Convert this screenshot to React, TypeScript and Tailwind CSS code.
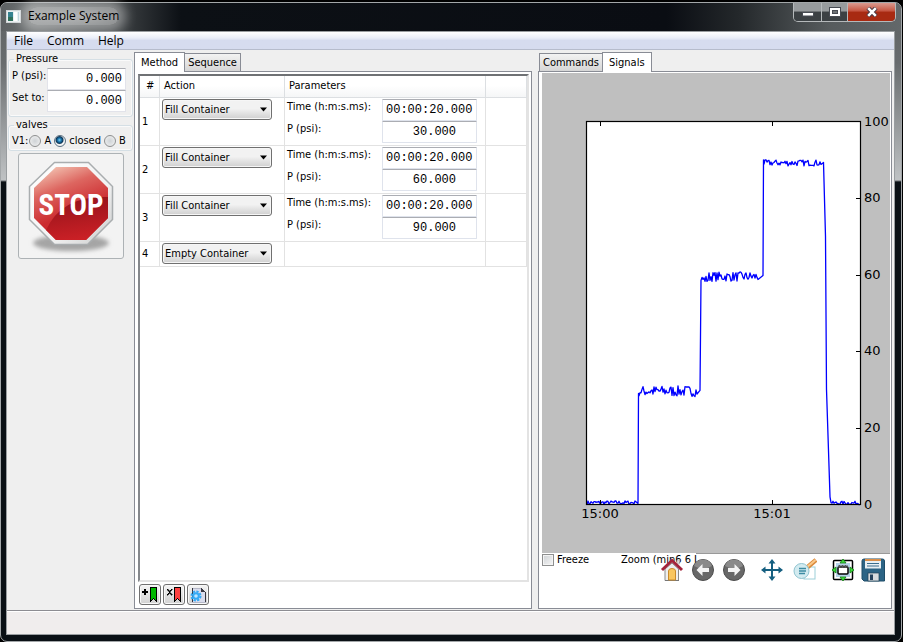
import React from "react";

const NOTEBOOK_BORDER = "border border-[#898c95]";

function Tab({ label, active = false }: { label: string; active?: boolean }) {
  return (
    <button
      type="button"
      role="tab"
      aria-selected={active}
      className={
        active
          ? "relative z-10 -mb-px h-5 border border-b-0 border-[#898c95] bg-white px-[6px] leading-[18px]"
          : "h-[18px] border-x border-t border-[#898c95] bg-linear-to-b from-[#f3f3f3] to-[#d6d6d6] px-[3px] leading-[18px] first:border-r-0 [&:not(:first-child)]:border-l-0"
      }
    >
      {label}
    </button>
  );
}

function FieldSet({ legend, children }: { legend: string; children: React.ReactNode }) {
  return (
    <fieldset className="mx-px rounded-[3px] border border-[#d5dfe5] px-[3px] shadow-[inset_0_0_0_1px_#fafafa]">
      <legend className="ml-[2px] px-[2px] leading-[14px]">{legend}</legend>
      {children}
    </fieldset>
  );
}

function PressureRow({ id, label, value }: { id: string; label: string; value: string }) {
  return (
    <div className="flex">
      <label htmlFor={id} className="w-[35px] shrink-0 whitespace-nowrap leading-[16px]">
        {label}
      </label>
      <input
        id={id}
        defaultValue={value}
        className="h-[22px] w-0 min-w-0 flex-1 border border-[#e2e3ea] border-t-[#abadb3] bg-white pr-[3px] text-right font-['Liberation_Mono',monospace] text-[12px]"
      />
    </div>
  );
}

function ValveRadio({ label, checked = false }: { label: string; checked?: boolean }) {
  return (
    <label className="flex items-center gap-[3px]">
      <input
        type="radio"
        name="v1"
        defaultChecked={checked}
        className="h-3 w-3 appearance-none rounded-full border border-[#8e8f8f] bg-radial from-[#cfd3d6] to-[#f4f4f4] checked:border-[#5a6f80] checked:bg-[radial-gradient(circle_at_45%_40%,#7fd0f5_0,#1b78b0_22%,#0c3556_42%,#f4f4f4_56%)]"
      />
      {label}
    </label>
  );
}

function StopSign() {
  return (
    <svg width="90" height="98" viewBox="26 157 90 98" role="img" aria-label="Stop">
      <defs>
        <linearGradient id="rim" x1="0" y1="0" x2="1" y2="1">
          <stop offset="0" stopColor="#ffffff" />
          <stop offset="0.6" stopColor="#f2f2f2" />
          <stop offset="1" stopColor="#c9caca" />
        </linearGradient>
        <linearGradient id="red" x1="0.2" y1="0" x2="0.6" y2="1">
          <stop offset="0" stopColor="#f3c3b2" />
          <stop offset="0.3" stopColor="#dd6660" />
          <stop offset="0.65" stopColor="#cc2c30" />
          <stop offset="1" stopColor="#c81f25" />
        </linearGradient>
        <linearGradient id="shade" x1="0.3" y1="0" x2="0.5" y2="1">
          <stop offset="0" stopColor="#93131a" />
          <stop offset="1" stopColor="#cb2026" />
        </linearGradient>
        <filter id="soft" x="-20%" y="-60%" width="140%" height="220%">
          <feGaussianBlur stdDeviation="2" />
        </filter>
      </defs>
      <ellipse cx="71" cy="243" rx="38" ry="8" fill="#a5a5a5" filter="url(#soft)" />
      <path d="M54.500 162.500H88.500L112.500 186.500V219.500L87.500 244.500H54.500L29.500 219.500V186.500Z" fill="url(#rim)" stroke="#a9adaf" strokeWidth="1.500" />
      <path d="M56 167H87L108 188V218L86 240H56L34 218V188Z" fill="url(#red)" />
      <path d="M108 197Q62 195 46 230L56 240H86L108 218Z" fill="url(#shade)" />
      <text x="71" y="215" textAnchor="middle" fill="#fff" fontWeight="700" fontSize="29" fontFamily="'Liberation Sans Narrow','Roboto Condensed',sans-serif">
        STOP
      </text>
    </svg>
  );
}

function LeftPanel() {
  return (
    <aside className="flex w-[127px] shrink-0 flex-col bg-[#efefef] pt-[2px]">
      <FieldSet legend="Pressure">
        <div className="pb-[4px] pr-[3px] pt-[2px]">
          <PressureRow id="p-psi" label="P (psi):" value="0.000" />
          <PressureRow id="set-to" label="Set to:" value="0.000" />
        </div>
      </FieldSet>
      <div className="mt-px">
        <FieldSet legend="valves">
          <div className="flex h-[18px] items-center gap-[3px]">
            <span className="-mr-[2px]">V1:</span>
            <ValveRadio label="A" />
            <ValveRadio label="closed" checked />
            <ValveRadio label="B" />
          </div>
        </FieldSet>
      </div>
      <button type="button" aria-label="Stop" className="mx-auto mt-[2px] flex h-[106px] w-[106px] items-center justify-center rounded-[3px] border border-[#adb2b5] bg-[#f3f3f3]">
        <StopSign />
      </button>
    </aside>
  );
}

function ActionSelect({ row, value }: { row: number; value: string }) {
  return (
    <div className="relative w-[110px]">
      <select
        aria-label={`Action ${row}`}
        defaultValue={value}
        className="block h-[21px] w-full appearance-none rounded-[3px] border border-[#707070] bg-linear-to-b from-[#f2f2f2] from-45% to-[#cfcfcf] pl-[2px] leading-[18px] shadow-[inset_0_0_0_1px_#f6f6f6]"
      >
        <option>Fill Container</option>
        <option>Empty Container</option>
      </select>
      <svg className="pointer-events-none absolute right-[5px] top-2" width="7" height="5" viewBox="0 0 7 5">
        <path d="M0 0.500H7L3.500 4.500Z" fill="#000" />
      </svg>
    </div>
  );
}

function ParamInput({ id, label, value, align }: { id: string; label: string; value: string; align: string }) {
  return (
    <>
      <label htmlFor={id} className="leading-[16px]">
        {label}
      </label>
      <input
        id={id}
        defaultValue={value}
        className={`h-[22px] w-full rounded-[1px] border border-[#dfe3ec] border-t-[#abadb3] bg-white font-['Liberation_Mono',monospace] text-[12px] ${align}`}
      />
    </>
  );
}

const ROWS = [
  { n: 1, action: "Fill Container", time: "00:00:20.000", p: "30.000" },
  { n: 2, action: "Fill Container", time: "00:00:20.000", p: "60.000" },
  { n: 3, action: "Fill Container", time: "00:00:20.000", p: "90.000" },
  { n: 4, action: "Empty Container" },
];

function MethodTable() {
  const th = "border-r border-b border-[#dcdfe2] bg-linear-to-b from-white from-45% to-[#f5f6f7] text-left font-normal";
  const td = "border-r border-b border-[#e2e2e2]";
  return (
    <table className="w-full table-fixed border-separate border-spacing-0">
      <colgroup>
        <col className="w-5" />
        <col className="w-[125px]" />
        <col className="w-[201px]" />
        <col />
      </colgroup>
      <thead>
        <tr className="h-[22px]">
          <th className={`${th} pl-[6px]`}>#</th>
          <th className={`${th} pl-1`}>Action</th>
          <th className={`${th} pl-1`}>Parameters</th>
          <th className={th} aria-label="Notes" />
        </tr>
      </thead>
      <tbody>
        {ROWS.map((r) => (
          <tr key={r.n} className={r.p ? "h-12" : "h-[25px]"}>
            <td className={`${td} pl-[2px] pt-px`}>{r.n}</td>
            <td className={`${td} pl-[2px] pt-px align-top`}>
              <ActionSelect row={r.n} value={r.action} />
            </td>
            <td className={`${td} pl-[2px] pt-px align-top`}>
              {r.p && (
                <div className="grid grid-cols-[95px_95px]">
                  <ParamInput id={`time-${r.n}`} label="Time (h:m:s.ms):" value={r.time!} align="pl-[3px]" />
                  <ParamInput id={`p-${r.n}`} label="P (psi):" value={r.p} align="pr-5 text-right" />
                </div>
              )}
            </td>
            <td className={td} />
          </tr>
        ))}
      </tbody>
    </table>
  );
}

function SmallButton({ label, children }: { label: string; children: React.ReactNode }) {
  return (
    <button type="button" aria-label={label} className="flex h-[21px] w-[22px] items-center justify-center rounded-[3px] border border-[#707070] bg-linear-to-b from-[#f4f4f4] to-[#d2d2d2] shadow-[inset_0_0_0_1px_#f8f8f8]">
      <svg width="16" height="16" viewBox="0 0 16 16" shapeRendering="crispEdges">
        {children}
      </svg>
    </button>
  );
}

function MethodNotebook() {
  return (
    <section className="flex min-w-0 flex-[398] flex-col">
      <div role="tablist" className="flex items-end">
        <Tab label="Method" active />
        <Tab label="Sequence" />
      </div>
      <div className={`flex flex-1 flex-col bg-white p-[2px] pl-[3px] ${NOTEBOOK_BORDER}`}>
        <div className="flex-1 border-2 border-[#e3e3e3] border-l-[#85888c] border-t-[#6f7174]">
          <MethodTable />
        </div>
        <div className="flex gap-[2px] pb-px pl-px pt-[2px]">
          <SmallButton label="Add row">
            <path d="M0 5H6M3 2V8" stroke="#000" strokeWidth="2" />
            <path d="M8.500 0.500H14.500V14.500L11.500 11.500L8.500 14.500Z" fill="#00b800" stroke="#000" />
          </SmallButton>
          <SmallButton label="Delete row">
            <path d="M1 2h1v1h1v1h1v-1h1v-1h1v1h-1v1h-1v2h1v1h1v1h-1v-1h-1v-1h-1v1h-1v1h-1v-1h1v-1h1v-2h-1v-1h-1Z" fill="#000" stroke="#000" strokeWidth="0.500" />
            <path d="M8.500 0.500H14.500V14.500L11.500 11.500L8.500 14.500Z" fill="#ff4040" stroke="#000" />
          </SmallButton>
          <SmallButton label="Method settings">
            <path d="M2 1H11L15 5V15H2Z" fill="#d9dcec" stroke="#b5b8c8" />
            <path d="M11 1L15 5H11Z" fill="#3a3a45" />
            <path d="M15 5V15M2 1V15" stroke="#33343e" />
            <g shapeRendering="geometricPrecision">
              <circle cx="6" cy="9" r="4.500" fill="none" stroke="#35aaf5" strokeWidth="2" strokeDasharray="2.300 1.200" />
              <circle cx="6" cy="9" r="2.800" fill="#bfe6ff" stroke="#35aaf5" strokeWidth="2" />
            </g>
          </SmallButton>
        </div>
      </div>
    </section>
  );
}

const yOf = (psi: number) => 504.5 - psi * 3.83;

function buildTrace() {
  let seed = 7;
  const rand = () => {
    seed = (seed * 16807) % 2147483647;
    return seed / 2147483647;
  };
  const pts: [number, number][] = [];
  const noisy = (from: number, to: number, base: number, spread: number) => {
    for (let x = from; x <= to; x += 1) pts.push([x, yOf(base + (rand() - 0.5) * spread)]);
  };
  noisy(587, 635, 0.5, 1);
  pts.push([638, yOf(0.3)], [638.5, yOf(29)]);
  noisy(639, 697, 29.6, 2.8);
  pts.push([700, yOf(29.8)], [701, yOf(58.5)]);
  noisy(702, 708, 58.8, 2);
  noisy(709, 758, 59.5, 2.5);
  pts.push([763, yOf(59.8)], [763.5, yOf(90)]);
  noisy(764, 821, 89.2, 1.6);
  pts.push([823.5, yOf(89.3)], [825.5, yOf(70)], [826.5, yOf(30)], [830, yOf(2)], [831, yOf(0.5)]);
  noisy(832, 860, 0.4, 0.9);
  return pts.map(([x, y]) => `${x},${y.toFixed(1)}`).join(" ");
}

const TRACE = buildTrace();

function SignalChart() {
  return (
    <svg className="h-full w-full" viewBox="542 73 348 480" role="img" aria-label="Pressure signal">
      <rect x="586.500" y="121.500" width="274" height="383" fill="#fff" />
      <polyline points={TRACE} fill="none" stroke="#0000ff" strokeWidth="1.300" strokeLinejoin="round" />
      <rect x="586.500" y="121.500" width="274" height="383" fill="none" stroke="#000" strokeWidth="1.200" />
      <path d="M600.500 122V126M600.500 504V500M772.500 122V126M772.500 504V500" stroke="#000" />
      {[20, 40, 60, 80].map((v) => (
        <path key={v} d={`M856 ${Math.round(yOf(v)) + 0.5}H860`} stroke="#000" />
      ))}
      <g fontFamily="'DejaVu Sans',sans-serif" fontSize="13" fill="#000">
        {[0, 20, 40, 60, 80, 100].map((v) => (
          <text key={v} x="864" y={Math.round(yOf(v)) + 4}>
            {v}
          </text>
        ))}
        <text x="600" y="518" textAnchor="middle">15:00</text>
        <text x="772" y="518" textAnchor="middle">15:01</text>
      </g>
    </svg>
  );
}

function ToolIcon({ label, className = "", children }: { label: string; className?: string; children: React.ReactNode }) {
  return (
    <button type="button" aria-label={label} className={className}>
      <svg width="24" height="24" viewBox="0 0 24 24">
        {children}
      </svg>
    </button>
  );
}

function ChartToolbar() {
  return (
    <div className="relative flex h-[55px] items-start">
      <div className="absolute left-[154px] right-0 top-0 border-t border-[#999]" />
      <div className="flex w-[150px] shrink-0 whitespace-nowrap leading-[14px]">
        <label className="flex w-[79px] shrink-0 gap-[3px]">
          <input type="checkbox" className="mt-px h-3 w-3 appearance-none border border-[#8e8f8f] bg-linear-to-br from-[#cfd2d5] to-[#f6f6f6] shadow-[inset_0_0_0_1px_#f4f4f4] checked:bg-[#2f6fb0]" />
          Freeze
        </label>
        <span>Zoom (min</span>
        <span>6 6 L</span>
      </div>
      <ToolIcon label="Home" className="relative -ml-8 mt-[5px]">
        <path d="M5 11V22.500H18.500V11L12 5Z" fill="#eeeeee" stroke="#8b8b8b" />
        <path d="M5 22.500H19" stroke="#777" />
        <path d="M8.500 22V13Q8.500 10.500 12 10.500T15.500 13V22Z" fill="#f9c65f" stroke="#c98a2a" />
        <path d="M17 2H19.500V6H17Z" fill="#ddd" stroke="#999" strokeWidth="0.500" />
        <path d="M2 12L12 2.500L22 12" fill="none" stroke="#a3243a" strokeWidth="3" />
      </ToolIcon>
      <ToolIcon label="Back" className="ml-[7px] mt-[5px]">
        <circle cx="12" cy="12" r="10.500" fill="#686868" stroke="#4d4d4d" />
        <path d="M3 8A9.500 9.500 0 0 1 21 8Q12 13 3 8Z" fill="#8a8a8a" />
        <path d="M5.500 12L11.500 6V10H18V14H11.500V18Z" fill="#f4f4f4" />
      </ToolIcon>
      <ToolIcon label="Forward" className="ml-[7px] mt-[5px]">
        <circle cx="12" cy="12" r="10.500" fill="#686868" stroke="#4d4d4d" />
        <path d="M3 8A9.500 9.500 0 0 1 21 8Q12 13 3 8Z" fill="#8a8a8a" />
        <path d="M18.500 12L12.500 6V10H6V14H12.500V18Z" fill="#f4f4f4" />
      </ToolIcon>
      <ToolIcon label="Pan" className="ml-[14px] mt-[5px]">
        <path d="M12 4V20M4 12H20" stroke="#155f80" strokeWidth="2" />
        <path d="M12 1L15.500 5.500H8.500ZM12 23L8.500 18.500H15.500ZM1 12L5.500 8.500V15.500ZM23 12L18.500 15.500V8.500Z" fill="#155f80" />
      </ToolIcon>
      <ToolIcon label="Zoom to rectangle" className="ml-[9px] mt-[5px]">
        <rect x="11" y="9" width="11" height="12" fill="#fff" stroke="#9ccfd8" />
        <path d="M13 10.500L23 2" stroke="#d98a3c" strokeWidth="4.500" />
        <path d="M13.500 9.500L22.500 2" stroke="#fbc98b" strokeWidth="2.200" />
        <circle cx="8.500" cy="13" r="7.500" fill="#d3ebf0" stroke="#8fc4d0" />
        <path d="M6 10.500H13M6 13H13M6 15.500H12" stroke="#3c8ca3" strokeWidth="1.500" />
      </ToolIcon>
      <ToolIcon label="Configure subplots" className="ml-[14px] mt-[5px]">
        <rect x="2.500" y="2.500" width="19" height="19" rx="1" fill="#fff" stroke="#000" strokeWidth="1.500" />
        <rect x="5" y="5" width="14" height="14" fill="#b5d3e8" />
        <rect x="7" y="9" width="10" height="7" rx="1" fill="#fff" stroke="#000" strokeWidth="1.500" />
        <path d="M7.500 8.500H17" stroke="#555" strokeWidth="3" strokeDasharray="2 1" />
        <path d="M12 1L15 5H9ZM12 23L9 19H15ZM1 12L5 9V15ZM23 12L19 15V9Z" fill="#3ddc3d" stroke="#117a11" strokeWidth="0.800" />
      </ToolIcon>
      <ToolIcon label="Save" className="ml-[6px] mt-[5px]">
        <path d="M1 3Q1 1 3 1H21.500Q23.500 1 23.500 3V23H3L1 21Z" fill="#2c6485" stroke="#1f4d68" />
        <rect x="4" y="1" width="16" height="2" fill="#d98f4a" />
        <rect x="4" y="3" width="16" height="7.500" fill="#e8f0f4" />
        <path d="M6 5.500H18M6 8H18" stroke="#3a6d8c" />
        <rect x="7" y="15" width="11" height="8" fill="#d7dadd" stroke="#1f3f55" strokeWidth="0.700" />
        <rect x="9" y="16.500" width="3" height="5.500" fill="#24405a" />
      </ToolIcon>
    </div>
  );
}

function SignalsNotebook() {
  return (
    <section className="flex min-w-0 flex-[354] flex-col">
      <div role="tablist" className="flex items-end pl-px">
        <Tab label="Commands" />
        <Tab label="Signals" active />
      </div>
      <div className={`flex min-h-0 flex-1 flex-col bg-white pl-[3px] pr-px pt-px ${NOTEBOOK_BORDER}`}>
        <div className="h-0 min-h-0 flex-1 bg-[#bfbfbf]">
          <SignalChart />
        </div>
        <ChartToolbar />
      </div>
    </section>
  );
}

function TitleBar() {
  return (
    <header className="flex h-7 items-start justify-between rounded-t-[6px] bg-[linear-gradient(to_right,#5d6163_0,#6b6f70_30px,#44484a_110px,#0c1015_180px,#0a0d13_74%,#24282b_82%,#565b5d_92%,#63686a_100%)]">
      <div className="flex items-center gap-[7px] pl-[5px] pt-1">
        <svg width="15" height="13" viewBox="0 0 15 13">
          <rect x="0.500" y="0.500" width="14" height="12" fill="#e9eef0" stroke="#cfd4d6" />
          <rect x="2" y="2" width="5" height="9" fill="#35828f" />
          <rect x="2" y="7" width="5" height="4" fill="#2f6f5a" />
          <rect x="8" y="2" width="3" height="9" fill="#fff" />
          <rect x="12" y="2" width="1" height="9" fill="#b9d3da" />
        </svg>
        <h1 className="bg-radial from-white/55 to-white/40 text-[12px] leading-[18px] text-black shadow-[0_0_12px_7px_rgba(255,255,255,0.4)] rounded-full font-['Open_Sans',sans-serif]">Example System</h1>
      </div>
      <div className="mr-[5px] flex h-[19px] overflow-hidden rounded-b-[5px] border border-t-0 border-[#b5b9bb]">
        <button type="button" aria-label="Minimize" className="flex w-7 items-end justify-center border-r border-[#b5b9bb] bg-linear-to-b from-[#979b9d] from-45% to-[#3c4144] to-50% pb-1">
          <svg width="12" height="5" viewBox="0 0 12 5">
            <rect x="0.500" y="0.500" width="11" height="3.500" fill="#fff" stroke="#474b52" />
          </svg>
        </button>
        <button type="button" aria-label="Maximize" className="flex w-[26px] items-center justify-center border-r border-[#b5b9bb] bg-linear-to-b from-[#979b9d] from-45% to-[#3c4144] to-50%">
          <svg width="12" height="10" viewBox="0 0 12 10">
            <rect x="0.500" y="0.500" width="11" height="9" fill="#fff" stroke="#474b52" />
            <rect x="3.500" y="3.500" width="5" height="3" fill="#6f7375" stroke="#474b52" />
          </svg>
        </button>
        <button type="button" aria-label="Close" className="flex w-[47px] items-center justify-center bg-linear-to-b from-[#d99a90] via-[#c5533f] via-45% to-[#a82a12] to-50%">
          <svg width="12" height="10" viewBox="0 0 12 10">
            <path d="M2 1L10 9M10 1L2 9" stroke="#4b3a45" strokeWidth="4.500" />
            <path d="M2.200 1.200L9.800 8.800M9.800 1.200L2.200 8.800" stroke="#fff" strokeWidth="2.500" />
          </svg>
        </button>
      </div>
    </header>
  );
}

export default function App() {
  return (
    <div className="flex min-h-screen flex-col bg-black pt-[2px] pr-px font-['DejaVu_Sans_Condensed','Noto_Sans',sans-serif] text-[11px] text-black">
      <div className="flex flex-1 flex-col rounded-[7px] border border-[#a3a7a9] bg-[linear-gradient(to_bottom,#5d6163_0,#686c6e_60px,#bfc2c4_177px,#0a1015_179px)]">
        <TitleBar />
        <div className="ml-[5px] mr-[6px] mb-[6px] flex flex-1 flex-col border border-[#999da0] bg-[#efefef]">
          <nav className="flex h-[18px] shrink-0 items-center gap-[14px] border-b border-[#b6bccc] bg-linear-to-b from-white via-[#eaeef8] via-35% to-[#d6dcef] to-50% pl-[7px] text-[12px] font-['Open_Sans',sans-serif]">
            <button type="button">File</button>
            <button type="button">Comm</button>
            <button type="button">Help</button>
          </nav>
          <main className="flex flex-1 bg-[#efefef] pr-[2px] pb-px">
            <LeftPanel />
            <div className="flex min-w-0 flex-1 gap-[6px] pt-[2px]">
              <MethodNotebook />
              <SignalsNotebook />
            </div>
          </main>
          <footer className="h-6 border-t border-[#8d8d92] bg-[#f0eded] shadow-[inset_0_1px_0_#fff]" />
        </div>
      </div>
    </div>
  );
}
